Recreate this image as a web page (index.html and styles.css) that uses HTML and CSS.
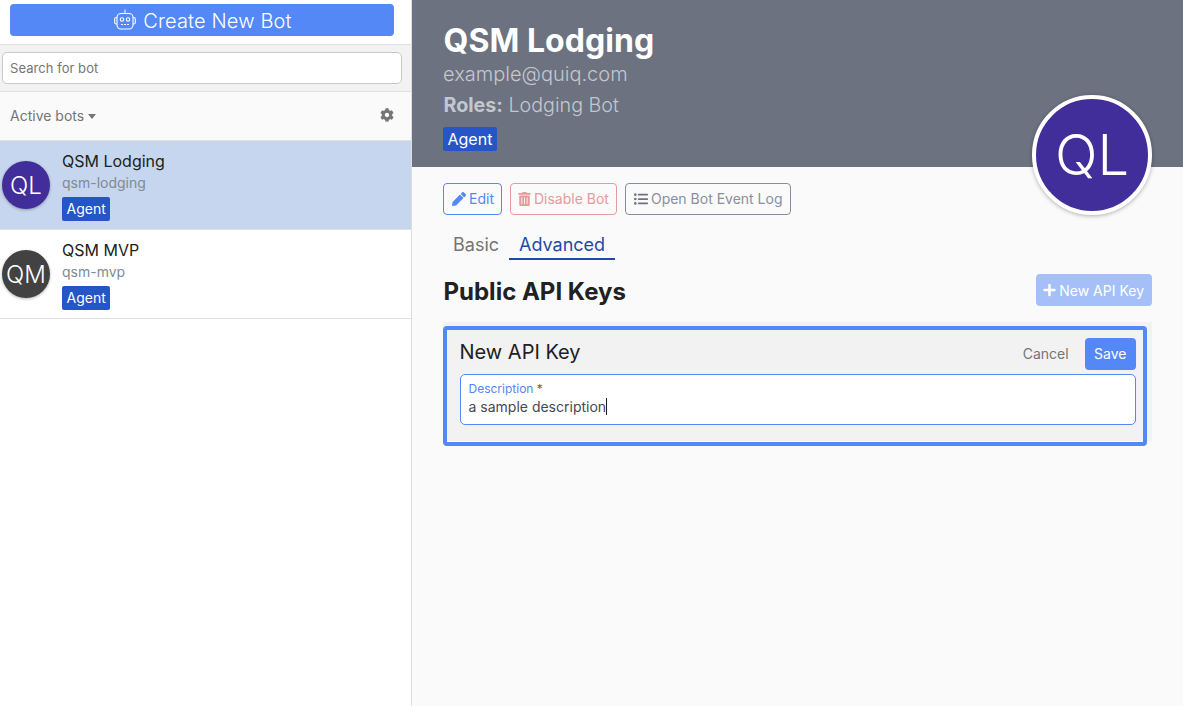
FILE: index.html
```html
<!DOCTYPE html>
<html lang="en">
<head>
<meta charset="utf-8">
<title>Bots</title>
<link rel="stylesheet" href="styles.css">
</head>
<body>
<div class="app">
  <aside class="sidebar">
    <div class="create-wrap">
      <button class="create-btn">
        <svg class="robot" viewBox="0 0 22 21" fill="none" stroke="currentColor" stroke-width="1.1">
          <path d="M11 .5v4"/>
          <rect x="3" y="4.500" width="16" height="15.500" rx="4"/>
          <path d="M3 8.500H2.200A1.500 1.500 0 0 0 .7 10v3.500A1.500 1.500 0 0 0 2.200 15H3M19 8.500h.8A1.500 1.500 0 0 1 21.300 10v3.500a1.500 1.500 0 0 1-1.500 1.500H19"/>
          <circle cx="8" cy="10.500" r="1.700"/><circle cx="14" cy="10.500" r="1.700"/>
          <path d="M7 15.500h2M10 15.500h2M13 15.500h2"/>
        </svg>
        <span class="create-text">Create New Bot</span>
      </button>
    </div>
    <div class="search-wrap"><div class="search">Search for bot</div></div>
    <div class="filter">
      <span class="filter-label">Active bots<i class="caret"></i></span>
      <svg class="cog" viewBox="0 0 512 512"><path fill="currentColor" d="M487.4 315.7l-42.6-24.6c4.3-23.2 4.3-47 0-70.2l42.6-24.6c4.9-2.8 7.1-8.6 5.5-14-11.1-35.6-30-67.8-54.7-94.6-3.8-4.1-10-5.1-14.8-2.3L380.8 110c-17.900-15.400-38.500-27.300-60.800-35.100V25.800c0-5.600-3.900-10.500-9.400-11.700-36.700-8.200-74.300-7.800-109.200 0-5.500 1.200-9.400 6.100-9.400 11.700V75c-22.200 7.900-42.800 19.800-60.800 35.100L88.700 85.500c-4.900-2.800-11-1.900-14.800 2.300-24.700 26.700-43.600 58.900-54.700 94.600-1.700 5.400.6 11.200 5.500 14L67.300 221c-4.300 23.200-4.300 47 0 70.200l-42.600 24.600c-4.900 2.800-7.100 8.600-5.500 14 11.100 35.600 30 67.800 54.700 94.600 3.800 4.100 10 5.100 14.800 2.300l42.600-24.600c17.900 15.400 38.500 27.300 60.800 35.100v49.200c0 5.600 3.900 10.500 9.400 11.700 36.700 8.200 74.300 7.800 109.200 0 5.500-1.200 9.400-6.100 9.400-11.700v-49.200c22.200-7.900 42.800-19.800 60.800-35.100l42.600 24.600c4.900 2.800 11 1.900 14.800-2.300 24.700-26.700 43.600-58.900 54.700-94.600 1.500-5.500-.7-11.300-5.600-14.100zM256 336c-44.100 0-80-35.900-80-80s35.900-80 80-80 80 35.900 80 80-35.900 80-80 80z"/></svg>
    </div>
    <div class="bot selected">
      <div class="avatar purple">QL</div>
      <div class="bot-info">
        <div class="bot-name">QSM Lodging</div>
        <div class="bot-id">qsm-lodging</div>
        <span class="tag">Agent</span>
      </div>
    </div>
    <div class="bot">
      <div class="avatar dark">QM</div>
      <div class="bot-info">
        <div class="bot-name">QSM MVP</div>
        <div class="bot-id">qsm-mvp</div>
        <span class="tag">Agent</span>
      </div>
    </div>
  </aside>
  <main class="main">
    <header class="hero">
      <h1>QSM Lodging</h1>
      <div class="email">example@quiq.com</div>
      <div class="roles"><b>Roles:</b> Lodging Bot</div>
      <span class="tag">Agent</span>
      <div class="hero-avatar">QL</div>
    </header>
    <section class="content">
      <div class="actions">
        <button class="btn-line blue">
          <svg class="ico" viewBox="0 0 512 512"><path fill="currentColor" d="M497.900 142.100l-46.100 46.100c-4.700 4.700-12.300 4.700-17 0l-111-111c-4.700-4.700-4.700-12.300 0-17l46.100-46.100c18.700-18.700 49.100-18.700 67.900 0l60.100 60.100c18.800 18.700 18.800 49.100 0 67.900zM284.200 99.800L21.600 362.400.4 483.900c-2.900 16.400 11.400 30.600 27.800 27.800l121.500-21.300 262.600-262.600c4.700-4.700 4.700-12.300 0-17l-111-111c-4.800-4.700-12.400-4.700-17.100 0z"/></svg><span>Edit</span>
        </button>
        <button class="btn-line red">
          <svg class="ico" viewBox="0 0 448 512"><path fill="currentColor" d="M32 464a48 48 0 0 0 48 48h288a48 48 0 0 0 48-48V128H32zm272-256a16 16 0 0 1 32 0v224a16 16 0 0 1-32 0zm-96 0a16 16 0 0 1 32 0v224a16 16 0 0 1-32 0zm-96 0a16 16 0 0 1 32 0v224a16 16 0 0 1-32 0zM432 32H312l-9.400-18.700A24 24 0 0 0 281.100 0H166.800a23.720 23.720 0 0 0-21.400 13.300L136 32H16A16 16 0 0 0 0 48v32a16 16 0 0 0 16 16h416a16 16 0 0 0 16-16V48a16 16 0 0 0-16-16z"/></svg><span>Disable Bot</span>
        </button>
        <button class="btn-line slate">
          <svg class="ico" viewBox="0 0 512 512"><path fill="currentColor" d="M0 96a48 48 0 1 1 96 0 48 48 0 0 1-96 0zm0 160a48 48 0 1 1 96 0 48 48 0 0 1-96 0zm0 160a48 48 0 1 1 96 0 48 48 0 0 1-96 0zM160 64h336a16 16 0 0 1 16 16v32a16 16 0 0 1-16 16H160a16 16 0 0 1-16-16V80a16 16 0 0 1 16-16zm0 160h336a16 16 0 0 1 16 16v32a16 16 0 0 1-16 16H160a16 16 0 0 1-16-16v-32a16 16 0 0 1 16-16zm0 160h336a16 16 0 0 1 16 16v32a16 16 0 0 1-16 16H160a16 16 0 0 1-16-16v-32a16 16 0 0 1 16-16z"/></svg><span>Open Bot Event Log</span>
        </button>
      </div>
      <nav class="tabs">
        <span class="tab">Basic</span>
        <span class="tab active">Advanced</span>
      </nav>
      <div class="section-head">
        <h2>Public API Keys</h2>
        <button class="btn-new">
          <svg class="ico-plus" viewBox="0 0 448 512"><path fill="currentColor" d="M416 208H272V64c0-17.700-14.300-32-32-32h-32c-17.700 0-32 14.300-32 32v144H32c-17.700 0-32 14.300-32 32v32c0 17.700 14.300 32 32 32h144v144c0 17.700 14.300 32 32 32h32c17.700 0 32-14.300 32-32V304h144c17.700 0 32-14.300 32-32v-32c0-17.700-14.300-32-32-32z"/></svg><span>New API Key</span>
        </button>
      </div>
      <div class="panel">
        <div class="panel-inner">
          <div class="panel-head">
            <span class="panel-title">New API Key</span>
            <span class="cancel">Cancel</span>
            <button class="save">Save</button>
          </div>
          <div class="field">
            <div class="field-label">Description <em>*</em></div>
            <div class="field-value">a sample description<i class="cursor"></i></div>
          </div>
        </div>
      </div>
    </section>
  </main>
</div>
</body>
</html>
```
FILE: styles.css
```css
* { box-sizing: border-box; }
html, body { margin: 0; height: 100%; }
body { font-family: Inter, "Liberation Sans", sans-serif; color: #212121; overflow: hidden; background: #fff; }
button { font-family: inherit; cursor: pointer; }
.app { display: flex; height: 706px; }

.sidebar { width: 412px; flex: none; border-right: 1px solid #dedede; background: #fff; }
.create-wrap { height: 45px; padding: 4px 17px 0 10px; border-bottom: 1px solid #e0e0e0; }
.create-btn { width: 100%; height: 32px; display: flex; align-items: center; justify-content: center; gap: 7px; background: #5488f7; color: #fff; border: 0; border-radius: 4px; font-size: 20px; font-weight: 300; letter-spacing: .15px; padding: 0 0 0 2px; }
.create-text { padding-top: 2px; }
.robot { width: 22px; height: 21px; margin-top: -1px; }
.search-wrap { height: 47px; padding: 7px 9px 7px 2px; background: #f2f2f2; border-bottom: 1px solid #e0e0e0; }
.search { height: 32px; background: #fff; border: 1px solid #c8c8c8; border-radius: 5px; padding: 0 7px; line-height: 30px; font-size: 13px; letter-spacing: .05px; color: #757575; }
.filter { height: 49px; display: flex; align-items: center; justify-content: space-between; padding: 0 17px 0 10px; background: #fafafa; border-bottom: 1px solid #e0e0e0; color: #757575; }
.filter-label { font-size: 14px; margin-top: -2px; }
.caret { display: inline-block; margin-left: 4px; vertical-align: 2px; border: 4.5px solid transparent; border-top: 5px solid #757575; border-bottom: 0; }
.cog { width: 14px; height: 14px; margin-top: -2px; }
.bot { height: 89px; display: flex; align-items: center; gap: 12px; padding: 0 2px; border-bottom: 1px solid #e0e0e0; }
.bot.selected { background: #c5d6ee; }
.avatar { width: 48px; height: 48px; flex: none; border-radius: 50%; display: flex; align-items: center; justify-content: center; color: #fff; font-size: 24px; font-weight: 300; box-shadow: 0 1px 3px rgba(0,0,0,.3); }
.purple { background: #422e9b; }
.dark { background: #424242; }
.bot-info { margin-top: 2px; }
.bot-name { font-size: 16px; line-height: 20px; }
.bot-id { font-size: 14px; line-height: 18px; color: #818a94; margin-top: 3px; }
.tag { display: inline-block; height: 24px; line-height: 24px; padding: 0 4.5px; background: #2555c7; color: #fff; font-size: 16px; border-radius: 2px; }
.bot-info .tag { margin-top: 5px; display: block; width: max-content; font-size: 14px; }

.main { flex: 1; min-width: 0; background: #fafafa; }
.hero { position: relative; height: 167px; background: #6c7280; padding: 21px 31px 0; color: #fff; }
.hero h1 { margin: 0 0 0 .5px; font-size: 32px; line-height: 39px; font-weight: 700; letter-spacing: .05px; }
.email { font-size: 20px; line-height: 24px; color: #c4c7cd; font-weight: 300; margin-top: 2px; }
.roles { font-size: 19.7px; line-height: 24px; color: #c4c7cd; font-weight: 300; margin: 7px 0 10px .5px; }
.roles b { font-weight: 700; }
.hero-avatar { position: absolute; left: 620px; top: 95px; width: 120px; height: 120px; border-radius: 50%; background: #422e9b; border: 4px solid #fff; color: #fff; display: flex; align-items: center; justify-content: center; font-size: 56px; font-weight: 300; box-shadow: 0 1px 4px rgba(0,0,0,.3); z-index: 1; }
.content { padding: 16px 31px 0; }
.actions { display: flex; gap: 8px; }
.btn-line { height: 32px; background: transparent; border: 1px solid; border-radius: 4px; display: flex; align-items: center; gap: 3px; padding: 0 7px; font-size: 14px; }
.btn-line span { margin-top: -1px; }
.ico { width: 14px; height: 14px; }
.blue { color: #5488f7; border-color: #5488f7; padding: 0 7px 0 8px; }
.red { color: #e49b9b; border-color: #e49b9b; }
.red .ico { width: 13px; }
.slate { color: #8b8f9c; border-color: #888ca0; padding: 0 7px 0 8px; }
.slate .ico { color: #6c7280; }
.tabs { display: flex; margin-top: 15px; }
.tab { padding: 0 10px; height: 30px; line-height: 30px; font-size: 18px; color: #757575; }
.tab.active { color: #1f4aa8; border-bottom: 2px solid #1f4aa8; }
.section-head { display: flex; align-items: center; justify-content: space-between; margin-top: 14px; height: 32px; }
.section-head h2 { margin: 4px 0 0 .5px; font-size: 24px; font-weight: 700; line-height: 32px; }
.btn-new { height: 32px; display: flex; align-items: center; gap: 3px; background: #a5bff9; color: #fff; border: 0; border-radius: 4px; padding: 0 8px 0 7.5px; font-size: 14px; }
.ico-plus { width: 13px; height: 14px; }
.panel { margin-top: 16px; height: 119px; padding: 4px 5px 0 0; background: #f2f2f2; }
.panel-inner { border: 4px solid #5488f7; border-radius: 4px; padding: 8px 7px 0 12.5px; height: 120px; }
.panel-head { display: flex; align-items: center; height: 32px; }
.panel-title { font-size: 20px; font-weight: 400; flex: 1; margin-top: -4px; }
.cancel { font-size: 14px; color: #757575; margin: -2px 16px 0 0; }
.save { height: 32px; border: 0; border-radius: 4px; background: #5488f7; color: #fff; font-size: 14px; padding: 0 9.5px 2px; }
.field { height: 51px; margin-top: 4px; border: 1px solid #5488f7; border-radius: 5px; background: #fff; padding: 6px 8px 0; }
.field-label { font-size: 12px; line-height: 16px; color: #5488f7; }
.field-label em { color: #c0392b; font-style: normal; }
.field-value { font-size: 14px; line-height: 20px; color: #444a55; }
.cursor { display: inline-block; width: 1px; height: 17px; background: #212121; vertical-align: -3px; }
```
